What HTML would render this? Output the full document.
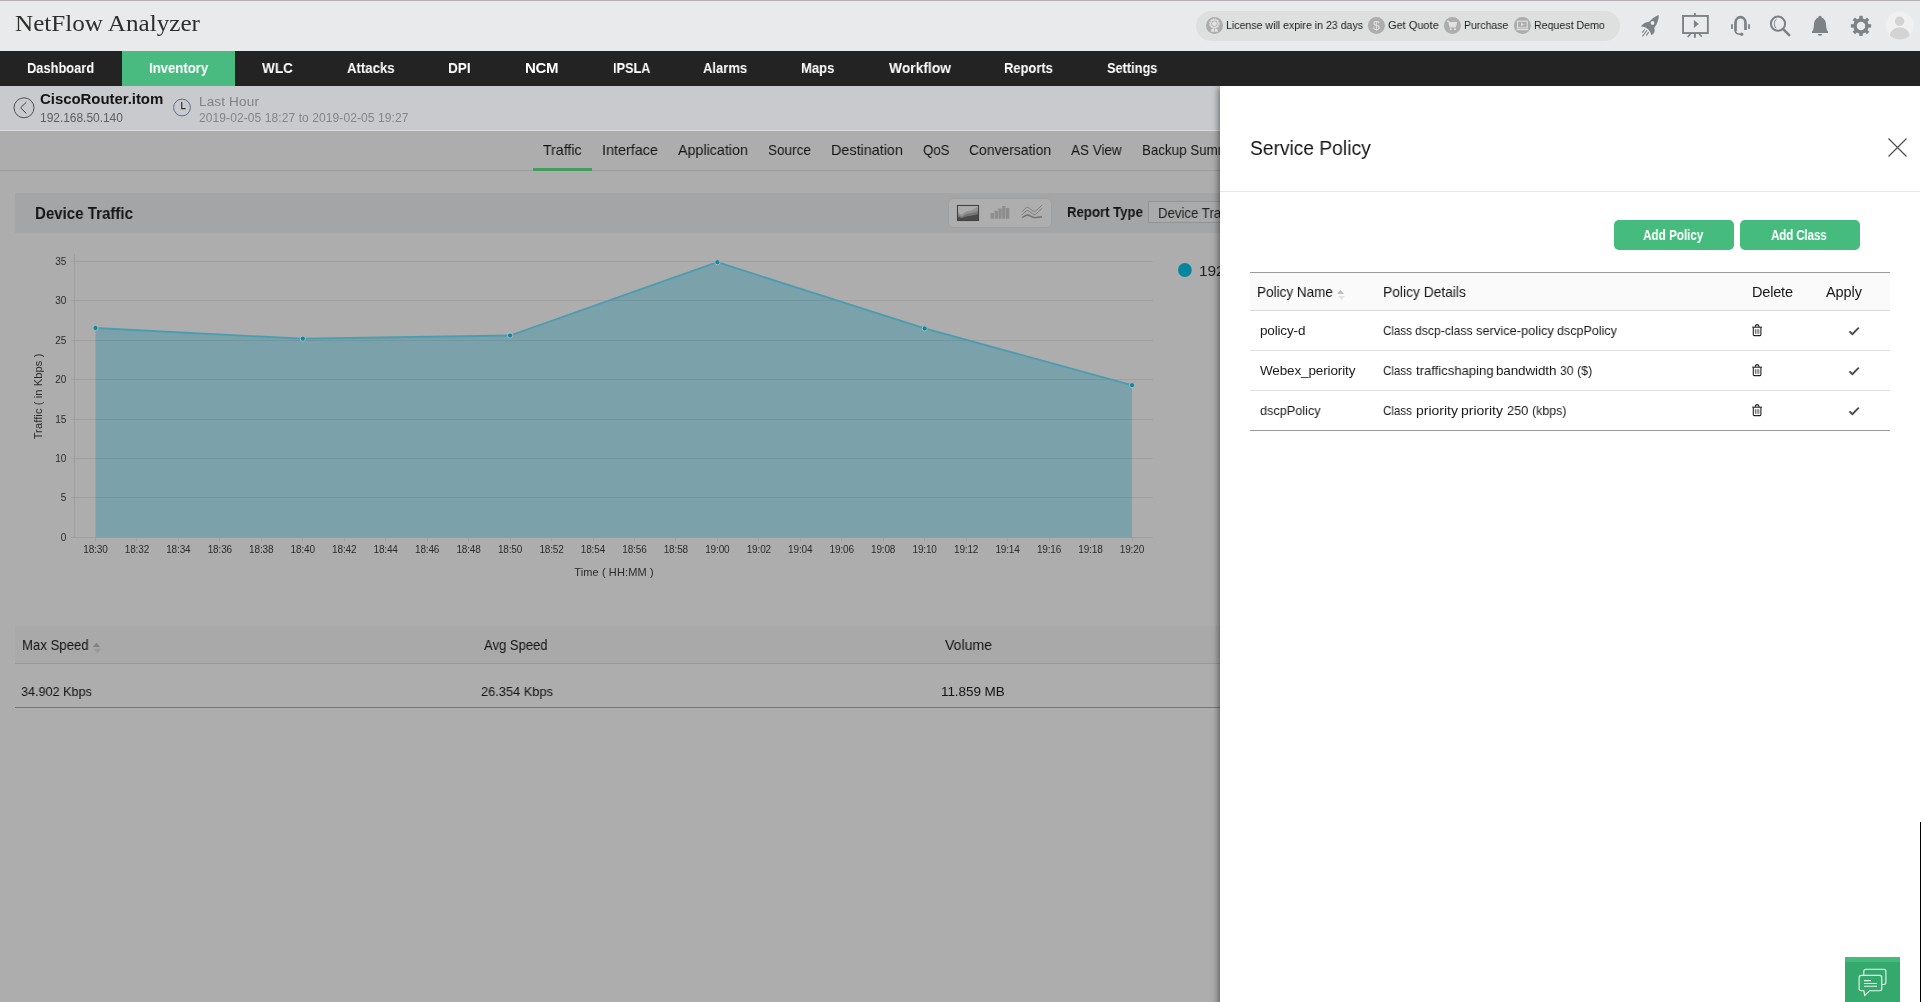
<!DOCTYPE html>
<html lang="en">
<head>
<meta charset="utf-8">
<title>NetFlow Analyzer - Service Policy</title>
<style>
html,body{margin:0;padding:0}
body{width:1921px;height:1002px;overflow:hidden;position:relative;background:#adadad;font-family:"Liberation Sans",sans-serif}
.a{position:absolute}
.t{will-change:transform;position:absolute;white-space:pre;font-family:"Liberation Sans",sans-serif;z-index:2}
.hdr{left:0;top:0;width:1920px;height:51px;background:#e9eaeb;border-top:1px solid #b3b1b4;box-sizing:border-box}
.pill{left:1196px;top:11px;width:424px;height:30px;border-radius:15px;background:#dedfdf}
.nav{left:0;top:51px;width:1920px;height:35px;background:#232323;z-index:5}
.navact{left:122px;top:51px;width:113px;height:35px;background:#49bb80;z-index:5}
.sub{left:0;top:86px;width:1920px;height:44px;background:#c9cace}
.subline{left:0;top:130px;width:1920px;height:1px;background:#dbdbdd}
.tabline{left:0;top:170px;width:1230px;height:1px;background:#9c9c9c}
.tabul{left:533px;top:168px;width:59px;height:3px;background:#449c5d}
.dbar{left:15px;top:193px;width:1215px;height:40px;background:#a4a5a7}
.bgrp{left:948px;top:198px;width:104px;height:29.5px;box-sizing:border-box;border:1px solid #9d9e9f;border-radius:5px;background:#aeaeae}
.sel{left:1148px;top:201px;width:110px;height:22px;box-sizing:border-box;border:1px solid #939394;background:#a9aaab}
.bth{left:15px;top:626px;width:1215px;height:37px;background:#a9a9a9}
.btl1{left:15px;top:663px;width:1215px;height:1px;background:#999}
.btl2{left:15px;top:707px;width:1215px;height:1px;background:#777}
.panel{left:1220px;top:86px;width:700px;height:930px;background:#fff;z-index:4;box-shadow:-1px 1px 7px rgba(0,0,0,.55)}
.psep{left:1220px;top:191px;width:700px;height:1px;background:#e7e7e7;z-index:5}
.btn{top:220px;width:120px;height:30px;border-radius:5px;background:#45bb7e;z-index:5}
.thbg{left:1250px;top:273px;width:640px;height:37px;background:#fafafa;z-index:5}
.hl{left:1250px;width:640px;height:1px;z-index:5}
.rc1{left:1920px;top:0;width:1px;height:822px;background:#fff;z-index:9}
.rc2{left:1920px;top:822px;width:1px;height:180px;background:#000;z-index:9}
.chat{left:1845px;top:957px;width:55px;height:45px;background:#35a86d;z-index:6}
.chat i{position:absolute;left:0;top:0;width:55px;height:5px;background:#46b97c}
svg.i,svg.chart{position:absolute;overflow:visible;will-change:transform}
</style>
</head>
<body>
<!-- header -->
<div class="a hdr"></div>
<div class="a pill"></div>
<svg class="i" width="1921" height="1002" viewBox="0 0 1921 1002" style="left:0;top:0;z-index:2">
<circle cx="1214.5" cy="25.4" r="8.5" fill="#adadad"/>
<circle cx="1214.4" cy="23.7" r="4.3" fill="#e2e2e2"/>
<circle cx="1214.4" cy="23.7" r="4.6" fill="none" stroke="#e2e2e2" stroke-width="1.1" stroke-dasharray="1.7 0.71"/>
<circle cx="1214.4" cy="23.7" r="2.8" fill="none" stroke="#adadad" stroke-width="0.9"/>
<path d="M1211.6,29 h2.3 l0.3,2.800 h-3.500z M1214.9,29 h2.300 l0.900,2.800 h-3.500z" fill="#e2e2e2"/>
<circle cx="1376.4" cy="25.4" r="8.5" fill="#adadad"/>
<text x="1376.4" y="29.8" font-family="Liberation Sans, sans-serif" font-size="12.5" fill="#e2e2e2" text-anchor="middle">$</text>
<circle cx="1452.4" cy="25.4" r="8.5" fill="#adadad"/>
<path d="M1447,21.2 h1.8 l1.2,5.6 h5.4 l1.1,-4.2 h-7.2" fill="none" stroke="#e2e2e2" stroke-width="1.2" stroke-linejoin="round"/>
<path d="M1449.6,22.8 h6.6 l-0.9,3.6 h-5z" fill="#e2e2e2"/>
<circle cx="1450.8" cy="29.3" r="1.05" fill="#e2e2e2"/><circle cx="1455" cy="29.3" r="1.05" fill="#e2e2e2"/>
<circle cx="1522.4" cy="25.4" r="8.5" fill="#adadad"/>
<rect x="1517.6" y="21.2" width="9.6" height="6.6" fill="none" stroke="#e2e2e2" stroke-width="1.1"/>
<path d="M1521.1,22.7 l3.2,1.8 l-3.2,1.8z" fill="#e2e2e2"/>
<path d="M1516.6,29.6 h11.6" stroke="#e2e2e2" stroke-width="1.2"/>
<path d="M1658.8,14.9 C1655,16 1651,19.5 1648.7,22.1 C1646,22 1642.5,23.8 1640.9,26.6 C1644.5,26.3 1650.5,29.5 1651.3,35.3 C1654,33.8 1655.5,30.8 1654.2,27.9 C1656.6,25 1658.9,20 1658.8,14.9Z" fill="#7d8286"/>
<circle cx="1652.5" cy="22.9" r="1.85" fill="#eceded"/>
<path d="M1644.7,29.5 L1642.2,32.7 M1647,30.4 L1642.3,36.5 M1648.7,32.2 L1646.2,35.6" stroke="#7d8286" stroke-width="1.1" fill="none"/>
<rect x="1683.05" y="15.95" width="24.8" height="17.1" fill="none" stroke="#7d8286" stroke-width="1.9"/>
<path d="M1694.9,13.1 V15.4 M1694.9,33.8 V37.7" stroke="#7d8286" stroke-width="1.9" fill="none"/>
<path d="M1690.6,34 L1687.6,36.8 M1699.2,34 L1701.8,36.6" stroke="#7d8286" stroke-width="1.6" fill="none"/>
<path d="M1693.9,20 L1698.8,23.95 L1693.9,27.9Z" fill="#7d8286"/>
<path d="M1735.5,31.2 V22.8 a5,5.7 0 0 1 10,0 V30" fill="none" stroke="#7d8286" stroke-width="2.7" stroke-linecap="butt"/>
<path d="M1732,24.8 V28.2 M1749.05,24.8 V28.2" stroke="#7d8286" stroke-width="1.8" stroke-linecap="round" fill="none"/>
<path d="M1735.2,30.6 c0.2,2.800 2,3.700 5.400,3.700" fill="none" stroke="#7d8286" stroke-width="1.5"/>
<circle cx="1741.7" cy="34.2" r="1.7" fill="#7d8286"/>
<circle cx="1778" cy="23.7" r="7.1" fill="none" stroke="#7d8286" stroke-width="2"/>
<path d="M1783.2,29.2 L1789.2,35.2" stroke="#7d8286" stroke-width="2.6" stroke-linecap="round"/>
<path d="M1776.6,19 c-3,2.2 -3,6.8 -0.4,9.2" fill="none" stroke="#7d8286" stroke-width="1"/>
<path d="M1820,15.8 c1,0 1.7,0.7 1.7,1.7 c2.9,1 4.2,3.8 4.4,7.2 c0.2,3.6 0.6,5.6 2,7.1 v1.2 h-16.2 v-1.2 c1.4,-1.5 1.8,-3.500 2,-7.1 c0.2,-3.400 1.500,-6.200 4.400,-7.200 c0,-1 0.700,-1.700 1.700,-1.700z" fill="#7d8286"/>
<path d="M1817.9,33.9 a2.1,1.9 0 0 0 4.2,0z" fill="#7d8286"/>
<circle cx="1861" cy="25.9" r="6" fill="none" stroke="#7d8286" stroke-width="3.5"/>
<rect x="1859.30" y="15.80" width="3.4" height="3.4" fill="#7d8286" transform="rotate(0 1861 25.9)"/>
<rect x="1859.30" y="15.80" width="3.4" height="3.4" fill="#7d8286" transform="rotate(45 1861 25.9)"/>
<rect x="1859.30" y="15.80" width="3.4" height="3.4" fill="#7d8286" transform="rotate(90 1861 25.9)"/>
<rect x="1859.30" y="15.80" width="3.4" height="3.4" fill="#7d8286" transform="rotate(135 1861 25.9)"/>
<rect x="1859.30" y="15.80" width="3.4" height="3.4" fill="#7d8286" transform="rotate(180 1861 25.9)"/>
<rect x="1859.30" y="15.80" width="3.4" height="3.4" fill="#7d8286" transform="rotate(225 1861 25.9)"/>
<rect x="1859.30" y="15.80" width="3.4" height="3.4" fill="#7d8286" transform="rotate(270 1861 25.9)"/>
<rect x="1859.30" y="15.80" width="3.4" height="3.4" fill="#7d8286" transform="rotate(315 1861 25.9)"/>
<defs><clipPath id="av"><circle cx="1899.8" cy="25.5" r="14"/></clipPath></defs>
<circle cx="1899.8" cy="25.5" r="14" fill="#f0f0f0"/>
<g clip-path="url(#av)" fill="#d3d3d3"><circle cx="1899.6" cy="21.2" r="4.7"/><ellipse cx="1899.8" cy="36.6" rx="10.2" ry="9.4"/></g>
<circle cx="24" cy="107.8" r="10" fill="none" stroke="#4f4f50" stroke-width="1"/>
<path d="M26.4,102.1 L20.6,107.8 L26.4,113.5" fill="none" stroke="#3c3c3c" stroke-width="1"/>
<circle cx="182" cy="107.5" r="8.4" fill="none" stroke="#5c6e84" stroke-width="1"/>
<path d="M181.7,102 V108.7 H185.6" fill="none" stroke="#333" stroke-width="1.2"/>
<rect x="957.5" y="205.5" width="21" height="15" fill="#acacac" stroke="#414141" stroke-width="1.1"/>
<path d="M958,212 L961.4,214.9 L966,211.6 L971,210.4 L975.5,208 L978,207.2 V220 H958Z" fill="#929292"/>
<path d="M958,214.8 L961.5,216.9 L966,214 L971,213.2 L975.5,212 L978,211.2 V220 H958Z" fill="#757575"/>
<path d="M958,217 L962,218 L966,216.600 L972,215.600 L978,214.2 V220 H958Z" fill="#4b4b4b"/>
<rect x="990.6" y="213.0" width="3.3" height="5.7" fill="#8d8d8d"/>
<rect x="994.6" y="210.8" width="3.3" height="7.9" fill="#8d8d8d"/>
<rect x="998.4" y="208.3" width="3.3" height="10.4" fill="#8d8d8d"/>
<rect x="1002.2" y="206.0" width="3.3" height="12.7" fill="#8d8d8d"/>
<rect x="1006.0" y="208.0" width="3.3" height="10.7" fill="#8d8d8d"/>
<path d="M1022.2,211.6 c2,-2 3.6,-4.2 5.4,-4.2 c2.2,0 4.2,4 7.2,4 c2,-0.6 4.5,-4.2 7.2,-6.200" fill="none" stroke="#7b7b7b" stroke-width="0.9"/>
<path d="M1022.2,214.8 c2,-2 3.6,-4.2 5.4,-4.2 c2.2,0 4.2,4 7.2,4 c2,-0.6 4.5,-4.2 7.2,-6.200" fill="none" stroke="#7b7b7b" stroke-width="0.9"/>
<path d="M1022.2,217.6 c2,-1.2 3.6,-2.600 5.4,-2.600 c2.2,0 4.2,2.600 7.200,2.600 c2,0 4.500,-0.600 7.200,-0.800" fill="none" stroke="#707070" stroke-width="1.4"/>
<path d="M96.5,642.8 L92.9,646.9 H100.1Z" fill="#808080"/>
<path d="M93.9,648.8 H101.1 L97.5,653Z" fill="#999"/>
</svg>
<!-- main nav -->
<div class="a nav"></div>
<div class="a navact"></div>
<!-- device sub bar -->
<div class="a sub"></div>
<div class="a subline"></div>
<!-- tabs -->
<div class="a tabline"></div>
<div class="a tabul"></div>
<!-- device traffic widget -->
<div class="a dbar"></div>
<div class="a bgrp"></div>
<div class="a sel"></div>
<svg class="chart" width="1220" height="600" viewBox="0 0 1220 600" style="position:absolute;left:0;top:0;z-index:1" font-family="Liberation Sans, sans-serif">
<line x1="71" x2="1153" y1="537.5" y2="537.5" stroke="#a0a0a0" stroke-width="1"/>
<line x1="71" x2="1153" y1="497.5" y2="497.5" stroke="#a0a0a0" stroke-width="1"/>
<line x1="71" x2="1153" y1="458.5" y2="458.5" stroke="#a0a0a0" stroke-width="1"/>
<line x1="71" x2="1153" y1="419.5" y2="419.5" stroke="#a0a0a0" stroke-width="1"/>
<line x1="71" x2="1153" y1="379.5" y2="379.5" stroke="#a0a0a0" stroke-width="1"/>
<line x1="71" x2="1153" y1="340.5" y2="340.5" stroke="#a0a0a0" stroke-width="1"/>
<line x1="71" x2="1153" y1="300.5" y2="300.5" stroke="#a0a0a0" stroke-width="1"/>
<line x1="71" x2="1153" y1="261.5" y2="261.5" stroke="#a0a0a0" stroke-width="1"/>
<line x1="74.5" x2="74.5" y1="254" y2="537.5" stroke="#9e9e9e" stroke-width="1"/>
<path d="M95.5,537.2 L95.5,328.0 L302.8,338.7 L510.1,335.5 L717.4,262.2 L924.7,328.4 L1132.0,385.2 L1132.0,537.2 Z" fill="#719fa9" fill-opacity="0.84"/>
<defs><clipPath id="ar"><path d="M95.5,537.2 L95.5,328.0 L302.8,338.7 L510.1,335.5 L717.4,262.2 L924.7,328.4 L1132.0,385.2 L1132.0,537.2 Z"/></clipPath></defs><g clip-path="url(#ar)">
<line x1="95.3" x2="1131.8" y1="537.5" y2="537.5" stroke="#3c5a63" stroke-opacity="0.13" stroke-width="1"/>
<line x1="95.3" x2="1131.8" y1="497.5" y2="497.5" stroke="#3c5a63" stroke-opacity="0.13" stroke-width="1"/>
<line x1="95.3" x2="1131.8" y1="458.5" y2="458.5" stroke="#3c5a63" stroke-opacity="0.13" stroke-width="1"/>
<line x1="95.3" x2="1131.8" y1="419.5" y2="419.5" stroke="#3c5a63" stroke-opacity="0.13" stroke-width="1"/>
<line x1="95.3" x2="1131.8" y1="379.5" y2="379.5" stroke="#3c5a63" stroke-opacity="0.13" stroke-width="1"/>
<line x1="95.3" x2="1131.8" y1="340.5" y2="340.5" stroke="#3c5a63" stroke-opacity="0.13" stroke-width="1"/>
<line x1="95.3" x2="1131.8" y1="300.5" y2="300.5" stroke="#3c5a63" stroke-opacity="0.13" stroke-width="1"/>
<line x1="95.3" x2="1131.8" y1="261.5" y2="261.5" stroke="#3c5a63" stroke-opacity="0.13" stroke-width="1"/>
</g>
<polyline points="95.5,328.0 302.8,338.7 510.1,335.5 717.4,262.2 924.7,328.4 1132.0,385.2" fill="none" stroke="#4a9db1" stroke-width="1.8" stroke-linejoin="round"/>
<circle cx="95.5" cy="328.0" r="2.6" fill="#0a88a1" stroke="#b3b8b9" stroke-width="1"/>
<circle cx="302.8" cy="338.7" r="2.6" fill="#0a88a1" stroke="#b3b8b9" stroke-width="1"/>
<circle cx="510.1" cy="335.5" r="2.6" fill="#0a88a1" stroke="#b3b8b9" stroke-width="1"/>
<circle cx="717.4" cy="262.2" r="2.6" fill="#0a88a1" stroke="#b3b8b9" stroke-width="1"/>
<circle cx="924.7" cy="328.4" r="2.6" fill="#0a88a1" stroke="#b3b8b9" stroke-width="1"/>
<circle cx="1132.0" cy="385.2" r="2.6" fill="#0a88a1" stroke="#b3b8b9" stroke-width="1"/>
<line x1="95.5" x2="95.5" y1="537.5" y2="541" stroke="#a0a0a0" stroke-width="1"/>
<text x="95.5" y="553" font-size="10" fill="#2b2b2b" text-anchor="middle" textLength="24.4" lengthAdjust="spacing">18:30</text>
<line x1="136.5" x2="136.5" y1="537.5" y2="541" stroke="#a0a0a0" stroke-width="1"/>
<text x="137.0" y="553" font-size="10" fill="#2b2b2b" text-anchor="middle" textLength="24.4" lengthAdjust="spacing">18:32</text>
<line x1="178.5" x2="178.5" y1="537.5" y2="541" stroke="#a0a0a0" stroke-width="1"/>
<text x="178.4" y="553" font-size="10" fill="#2b2b2b" text-anchor="middle" textLength="24.4" lengthAdjust="spacing">18:34</text>
<line x1="219.5" x2="219.5" y1="537.5" y2="541" stroke="#a0a0a0" stroke-width="1"/>
<text x="219.9" y="553" font-size="10" fill="#2b2b2b" text-anchor="middle" textLength="24.4" lengthAdjust="spacing">18:36</text>
<line x1="261.5" x2="261.5" y1="537.5" y2="541" stroke="#a0a0a0" stroke-width="1"/>
<text x="261.3" y="553" font-size="10" fill="#2b2b2b" text-anchor="middle" textLength="24.4" lengthAdjust="spacing">18:38</text>
<line x1="302.5" x2="302.5" y1="537.5" y2="541" stroke="#a0a0a0" stroke-width="1"/>
<text x="302.8" y="553" font-size="10" fill="#2b2b2b" text-anchor="middle" textLength="24.4" lengthAdjust="spacing">18:40</text>
<line x1="344.5" x2="344.5" y1="537.5" y2="541" stroke="#a0a0a0" stroke-width="1"/>
<text x="344.3" y="553" font-size="10" fill="#2b2b2b" text-anchor="middle" textLength="24.4" lengthAdjust="spacing">18:42</text>
<line x1="385.5" x2="385.5" y1="537.5" y2="541" stroke="#a0a0a0" stroke-width="1"/>
<text x="385.7" y="553" font-size="10" fill="#2b2b2b" text-anchor="middle" textLength="24.4" lengthAdjust="spacing">18:44</text>
<line x1="427.5" x2="427.5" y1="537.5" y2="541" stroke="#a0a0a0" stroke-width="1"/>
<text x="427.2" y="553" font-size="10" fill="#2b2b2b" text-anchor="middle" textLength="24.4" lengthAdjust="spacing">18:46</text>
<line x1="468.5" x2="468.5" y1="537.5" y2="541" stroke="#a0a0a0" stroke-width="1"/>
<text x="468.6" y="553" font-size="10" fill="#2b2b2b" text-anchor="middle" textLength="24.4" lengthAdjust="spacing">18:48</text>
<line x1="510.5" x2="510.5" y1="537.5" y2="541" stroke="#a0a0a0" stroke-width="1"/>
<text x="510.1" y="553" font-size="10" fill="#2b2b2b" text-anchor="middle" textLength="24.4" lengthAdjust="spacing">18:50</text>
<line x1="551.5" x2="551.5" y1="537.5" y2="541" stroke="#a0a0a0" stroke-width="1"/>
<text x="551.6" y="553" font-size="10" fill="#2b2b2b" text-anchor="middle" textLength="24.4" lengthAdjust="spacing">18:52</text>
<line x1="593.5" x2="593.5" y1="537.5" y2="541" stroke="#a0a0a0" stroke-width="1"/>
<text x="593.0" y="553" font-size="10" fill="#2b2b2b" text-anchor="middle" textLength="24.4" lengthAdjust="spacing">18:54</text>
<line x1="634.5" x2="634.5" y1="537.5" y2="541" stroke="#a0a0a0" stroke-width="1"/>
<text x="634.5" y="553" font-size="10" fill="#2b2b2b" text-anchor="middle" textLength="24.4" lengthAdjust="spacing">18:56</text>
<line x1="675.5" x2="675.5" y1="537.5" y2="541" stroke="#a0a0a0" stroke-width="1"/>
<text x="675.9" y="553" font-size="10" fill="#2b2b2b" text-anchor="middle" textLength="24.4" lengthAdjust="spacing">18:58</text>
<line x1="717.5" x2="717.5" y1="537.5" y2="541" stroke="#a0a0a0" stroke-width="1"/>
<text x="717.4" y="553" font-size="10" fill="#2b2b2b" text-anchor="middle" textLength="24.4" lengthAdjust="spacing">19:00</text>
<line x1="758.5" x2="758.5" y1="537.5" y2="541" stroke="#a0a0a0" stroke-width="1"/>
<text x="758.9" y="553" font-size="10" fill="#2b2b2b" text-anchor="middle" textLength="24.4" lengthAdjust="spacing">19:02</text>
<line x1="800.5" x2="800.5" y1="537.5" y2="541" stroke="#a0a0a0" stroke-width="1"/>
<text x="800.3" y="553" font-size="10" fill="#2b2b2b" text-anchor="middle" textLength="24.4" lengthAdjust="spacing">19:04</text>
<line x1="841.5" x2="841.5" y1="537.5" y2="541" stroke="#a0a0a0" stroke-width="1"/>
<text x="841.8" y="553" font-size="10" fill="#2b2b2b" text-anchor="middle" textLength="24.4" lengthAdjust="spacing">19:06</text>
<line x1="883.5" x2="883.5" y1="537.5" y2="541" stroke="#a0a0a0" stroke-width="1"/>
<text x="883.2" y="553" font-size="10" fill="#2b2b2b" text-anchor="middle" textLength="24.4" lengthAdjust="spacing">19:08</text>
<line x1="924.5" x2="924.5" y1="537.5" y2="541" stroke="#a0a0a0" stroke-width="1"/>
<text x="924.7" y="553" font-size="10" fill="#2b2b2b" text-anchor="middle" textLength="24.4" lengthAdjust="spacing">19:10</text>
<line x1="966.5" x2="966.5" y1="537.5" y2="541" stroke="#a0a0a0" stroke-width="1"/>
<text x="966.2" y="553" font-size="10" fill="#2b2b2b" text-anchor="middle" textLength="24.4" lengthAdjust="spacing">19:12</text>
<line x1="1007.5" x2="1007.5" y1="537.5" y2="541" stroke="#a0a0a0" stroke-width="1"/>
<text x="1007.6" y="553" font-size="10" fill="#2b2b2b" text-anchor="middle" textLength="24.4" lengthAdjust="spacing">19:14</text>
<line x1="1049.5" x2="1049.5" y1="537.5" y2="541" stroke="#a0a0a0" stroke-width="1"/>
<text x="1049.1" y="553" font-size="10" fill="#2b2b2b" text-anchor="middle" textLength="24.4" lengthAdjust="spacing">19:16</text>
<line x1="1090.5" x2="1090.5" y1="537.5" y2="541" stroke="#a0a0a0" stroke-width="1"/>
<text x="1090.5" y="553" font-size="10" fill="#2b2b2b" text-anchor="middle" textLength="24.4" lengthAdjust="spacing">19:18</text>
<line x1="1132.5" x2="1132.5" y1="537.5" y2="541" stroke="#a0a0a0" stroke-width="1"/>
<text x="1132.0" y="553" font-size="10" fill="#2b2b2b" text-anchor="middle" textLength="24.4" lengthAdjust="spacing">19:20</text>
<text x="66.4" y="540.8" font-size="10" fill="#2b2b2b" text-anchor="end">0</text>
<text x="66.4" y="501.4" font-size="10" fill="#2b2b2b" text-anchor="end">5</text>
<text x="66.4" y="461.9" font-size="10" fill="#2b2b2b" text-anchor="end">10</text>
<text x="66.4" y="422.6" font-size="10" fill="#2b2b2b" text-anchor="end">15</text>
<text x="66.4" y="383.1" font-size="10" fill="#2b2b2b" text-anchor="end">20</text>
<text x="66.4" y="343.8" font-size="10" fill="#2b2b2b" text-anchor="end">25</text>
<text x="66.4" y="304.4" font-size="10" fill="#2b2b2b" text-anchor="end">30</text>
<text x="66.4" y="264.9" font-size="10" fill="#2b2b2b" text-anchor="end">35</text>
<text x="613.9" y="576" font-size="11" fill="#2b2b2b" text-anchor="middle" textLength="79.3" lengthAdjust="spacing">Time ( HH:MM )</text>
<text transform="translate(42.2,396.5) rotate(-90)" font-size="11" fill="#2b2b2b" text-anchor="middle" textLength="85.7" lengthAdjust="spacing">Traffic ( in Kbps )</text>
<circle cx="1184.9" cy="270" r="6.9" fill="#06869e"/>
</svg>
<!-- summary table -->
<div class="a bth"></div>
<div class="a btl1"></div>
<div class="a btl2"></div>
<!-- slide-in panel -->
<div class="a panel"></div>
<div class="a psep"></div>
<div class="a btn" style="left:1614px"></div>
<div class="a btn" style="left:1740px"></div>
<div class="a hl" style="top:272px;background:#9b9b9b"></div>
<div class="a thbg"></div>
<div class="a hl" style="top:310px;background:#dcdcdc"></div>
<div class="a hl" style="top:350px;background:#dfdfdf"></div>
<div class="a hl" style="top:390px;background:#dfdfdf"></div>
<div class="a hl" style="top:430px;background:#9b9b9b"></div>
<svg class="i" width="1921" height="1002" viewBox="0 0 1921 1002" style="left:0;top:0;z-index:7">
<path d="M1888.5,138.5 L1906.5,156.5 M1906.5,138.5 L1888.5,156.5" stroke="#4c5054" stroke-width="1.15" fill="none"/>
<path d="M1340.5,290 L1337,293.9 H1344.1Z" fill="#bdbdbd"/>
<path d="M1338,296.1 H1345 L1341.5,300Z" fill="#e3e3e3"/>
<g transform="translate(0,0)" fill="none" stroke="#222" stroke-width="1.1">
<path d="M1752.2,327.2 H1762"/>
<path d="M1755.2,327 c0.300,-3.200 3.500,-3.200 3.800,0"/>
<path d="M1753.3,327.4 V334.600 q0,1 1,1 H1759.9 q1,0 1,-1 V327.4"/>
<path d="M1755.4,329.2 V333.8 M1757.1,329.2 V333.8 M1758.8,329.2 V333.8" stroke-width="0.9" stroke="#555"/>
</g>
<path d="M1849.5,331.3 L1852.4,334.2 L1858.8,327.6" fill="none" stroke="#4a4a4a" stroke-width="1.9"/>
<g transform="translate(0,40)" fill="none" stroke="#222" stroke-width="1.1">
<path d="M1752.2,327.2 H1762"/>
<path d="M1755.2,327 c0.300,-3.200 3.500,-3.200 3.800,0"/>
<path d="M1753.3,327.4 V334.600 q0,1 1,1 H1759.9 q1,0 1,-1 V327.4"/>
<path d="M1755.4,329.2 V333.8 M1757.1,329.2 V333.8 M1758.8,329.2 V333.8" stroke-width="0.9" stroke="#555"/>
</g>
<path d="M1849.5,371.3 L1852.4,374.2 L1858.8,367.6" fill="none" stroke="#4a4a4a" stroke-width="1.9"/>
<g transform="translate(0,80)" fill="none" stroke="#222" stroke-width="1.1">
<path d="M1752.2,327.2 H1762"/>
<path d="M1755.2,327 c0.300,-3.200 3.500,-3.200 3.800,0"/>
<path d="M1753.3,327.4 V334.600 q0,1 1,1 H1759.9 q1,0 1,-1 V327.4"/>
<path d="M1755.4,329.2 V333.8 M1757.1,329.2 V333.8 M1758.8,329.2 V333.8" stroke-width="0.9" stroke="#555"/>
</g>
<path d="M1849.5,411.3 L1852.4,414.2 L1858.8,407.6" fill="none" stroke="#4a4a4a" stroke-width="1.9"/>
<g fill="none" stroke="#e9f6ee" stroke-width="1.1" stroke-linejoin="round">
<path d="M1863.8,975.4 V971.4 q0,-2.200 2.200,-2.200 H1883.7 q2.200,0 2.200,2.200 V982.3 q0,2.200 -2.200,2.200 H1882"/>
<path d="M1861.3,975.4 H1879.6 q2.200,0 2.200,2.200 V988.5 q0,2.200 -2.200,2.200 H1869.8 L1864.6,995.7 L1863.9,990.7 H1861.3 q-2.200,0 -2.200,-2.200 V977.6 q0,-2.200 2.200,-2.200z"/>
<path d="M1864,980.6 H1871 M1864,983.5 H1877 M1864,986.2 H1877"/>
</g>
</svg>
<div class="a chat"><i></i></div>
<div class="a rc1"></div>
<div class="a rc2"></div>
<!-- texts -->
<span class="t" style="left:15.10px;top:12.34px;font-size:23px;line-height:23px;letter-spacing:0.000px;color:#2e2e2e;transform:scaleX(1.0924);transform-origin:0 0;font-family:'Liberation Serif',serif;">NetFlow Analyzer</span>
<span class="t" style="left:1226.00px;top:19.87px;font-size:11.5px;line-height:11.5px;letter-spacing:0.000px;color:#1c1c1c;transform:scaleX(0.9198);transform-origin:0 0;">License will expire in 23 days</span>
<span class="t" style="left:1388.30px;top:19.87px;font-size:11.5px;line-height:11.5px;letter-spacing:0.000px;color:#1c1c1c;transform:scaleX(0.9555);transform-origin:0 0;">Get Quote</span>
<span class="t" style="left:1464.30px;top:19.87px;font-size:11.5px;line-height:11.5px;letter-spacing:0.000px;color:#1c1c1c;transform:scaleX(0.9096);transform-origin:0 0;">Purchase</span>
<span class="t" style="left:1534.20px;top:19.87px;font-size:11.5px;line-height:11.5px;letter-spacing:0.000px;color:#1c1c1c;transform:scaleX(0.9229);transform-origin:0 0;">Request Demo</span>
<span class="t" style="left:27.10px;top:60.30px;font-size:15px;line-height:15px;letter-spacing:0.000px;color:#fff;transform:scaleX(0.8569);transform-origin:0 0;font-weight:700;z-index:6;">Dashboard</span>
<span class="t" style="left:148.85px;top:60.30px;font-size:15px;line-height:15px;letter-spacing:0.000px;color:#fff;transform:scaleX(0.8761);transform-origin:0 0;font-weight:700;z-index:6;">Inventory</span>
<span class="t" style="left:262.10px;top:60.30px;font-size:15px;line-height:15px;letter-spacing:0.000px;color:#fff;transform:scaleX(0.9047);transform-origin:0 0;font-weight:700;z-index:6;">WLC</span>
<span class="t" style="left:346.60px;top:60.30px;font-size:15px;line-height:15px;letter-spacing:0.000px;color:#fff;transform:scaleX(0.8791);transform-origin:0 0;font-weight:700;z-index:6;">Attacks</span>
<span class="t" style="left:448.35px;top:60.30px;font-size:15px;line-height:15px;letter-spacing:0.000px;color:#fff;transform:scaleX(0.9054);transform-origin:0 0;font-weight:700;z-index:6;">DPI</span>
<span class="t" style="left:525.10px;top:60.30px;font-size:15px;line-height:15px;letter-spacing:-0.386px;color:#fff;font-weight:700;z-index:6;">NCM</span>
<span class="t" style="left:612.60px;top:60.30px;font-size:15px;line-height:15px;letter-spacing:0.000px;color:#fff;transform:scaleX(0.8464);transform-origin:0 0;font-weight:700;z-index:6;">IPSLA</span>
<span class="t" style="left:702.85px;top:60.30px;font-size:15px;line-height:15px;letter-spacing:0.000px;color:#fff;transform:scaleX(0.8681);transform-origin:0 0;font-weight:700;z-index:6;">Alarms</span>
<span class="t" style="left:801.10px;top:60.30px;font-size:15px;line-height:15px;letter-spacing:0.000px;color:#fff;transform:scaleX(0.8711);transform-origin:0 0;font-weight:700;z-index:6;">Maps</span>
<span class="t" style="left:888.60px;top:60.30px;font-size:15px;line-height:15px;letter-spacing:0.000px;color:#fff;transform:scaleX(0.9207);transform-origin:0 0;font-weight:700;z-index:6;">Workflow</span>
<span class="t" style="left:1004.10px;top:60.30px;font-size:15px;line-height:15px;letter-spacing:0.000px;color:#fff;transform:scaleX(0.8626);transform-origin:0 0;font-weight:700;z-index:6;">Reports</span>
<span class="t" style="left:1106.60px;top:60.30px;font-size:15px;line-height:15px;letter-spacing:0.000px;color:#fff;transform:scaleX(0.8515);transform-origin:0 0;font-weight:700;z-index:6;">Settings</span>
<span class="t" style="left:39.50px;top:91.00px;font-size:15px;line-height:15px;letter-spacing:-0.059px;color:#151515;font-weight:700;">CiscoRouter.itom</span>
<span class="t" style="left:40.00px;top:111.74px;font-size:12px;line-height:12px;letter-spacing:-0.040px;color:#5e5f62;">192.168.50.140</span>
<span class="t" style="left:199.10px;top:94.77px;font-size:13.5px;line-height:13.5px;letter-spacing:0.171px;color:#7f8185;">Last Hour</span>
<span class="t" style="left:198.60px;top:111.74px;font-size:12px;line-height:12px;letter-spacing:0.092px;color:#83858a;">2019-02-05 18:27 to 2019-02-05 19:27</span>
<span class="t" style="left:543.10px;top:142.20px;font-size:15px;line-height:15px;letter-spacing:0.000px;color:#141414;transform:scaleX(0.9463);transform-origin:0 0;">Traffic</span>
<span class="t" style="left:601.60px;top:142.20px;font-size:15px;line-height:15px;letter-spacing:0.000px;color:#141414;transform:scaleX(0.9576);transform-origin:0 0;">Interface</span>
<span class="t" style="left:677.60px;top:142.20px;font-size:15px;line-height:15px;letter-spacing:0.000px;color:#141414;transform:scaleX(0.9524);transform-origin:0 0;">Application</span>
<span class="t" style="left:767.60px;top:142.20px;font-size:15px;line-height:15px;letter-spacing:0.000px;color:#141414;transform:scaleX(0.9026);transform-origin:0 0;">Source</span>
<span class="t" style="left:830.60px;top:142.20px;font-size:15px;line-height:15px;letter-spacing:0.000px;color:#141414;transform:scaleX(0.9581);transform-origin:0 0;">Destination</span>
<span class="t" style="left:922.60px;top:142.20px;font-size:15px;line-height:15px;letter-spacing:0.000px;color:#141414;transform:scaleX(0.8795);transform-origin:0 0;">QoS</span>
<span class="t" style="left:968.90px;top:142.20px;font-size:15px;line-height:15px;letter-spacing:0.000px;color:#141414;transform:scaleX(0.9288);transform-origin:0 0;">Conversation</span>
<span class="t" style="left:1071.30px;top:142.20px;font-size:15px;line-height:15px;letter-spacing:0.000px;color:#141414;transform:scaleX(0.8986);transform-origin:0 0;">AS View</span>
<span class="t" style="left:1142.30px;top:142.20px;font-size:15px;line-height:15px;letter-spacing:0.000px;color:#141414;transform:scaleX(0.8904);transform-origin:0 0;">Backup Summary</span>
<span class="t" style="left:35.10px;top:205.03px;font-size:16.5px;line-height:16.5px;letter-spacing:0.000px;color:#141414;transform:scaleX(0.9123);transform-origin:0 0;font-weight:700;">Device Traffic</span>
<span class="t" style="left:1067.10px;top:204.93px;font-size:14.5px;line-height:14.5px;letter-spacing:0.000px;color:#141414;transform:scaleX(0.9086);transform-origin:0 0;font-weight:700;">Report Type</span>
<span class="t" style="left:1158.20px;top:205.73px;font-size:14.5px;line-height:14.5px;letter-spacing:0.000px;color:#222;transform:scaleX(0.9112);transform-origin:0 0;">Device Traffic</span>
<span class="t" style="left:1198.90px;top:262.88px;font-size:15.5px;line-height:15.5px;letter-spacing:-0.127px;color:#222;">192.168.50.140</span>
<span class="t" style="left:21.90px;top:638.13px;font-size:14.5px;line-height:14.5px;letter-spacing:0.000px;color:#141414;transform:scaleX(0.9079);transform-origin:0 0;">Max Speed</span>
<span class="t" style="left:484.40px;top:638.13px;font-size:14.5px;line-height:14.5px;letter-spacing:0.000px;color:#141414;transform:scaleX(0.8997);transform-origin:0 0;">Avg Speed</span>
<span class="t" style="left:944.60px;top:638.13px;font-size:14.5px;line-height:14.5px;letter-spacing:0.000px;color:#141414;transform:scaleX(0.9716);transform-origin:0 0;">Volume</span>
<span class="t" style="left:21.30px;top:684.57px;font-size:13.5px;line-height:13.5px;letter-spacing:0.000px;color:#141414;transform:scaleX(0.9352);transform-origin:0 0;">34.902 Kbps</span>
<span class="t" style="left:480.60px;top:684.57px;font-size:13.5px;line-height:13.5px;letter-spacing:0.000px;color:#141414;transform:scaleX(0.9497);transform-origin:0 0;">26.354 Kbps</span>
<span class="t" style="left:940.80px;top:684.57px;font-size:13.5px;line-height:13.5px;letter-spacing:-0.075px;color:#141414;">11.859 MB</span>
<span class="t" style="left:1250.10px;top:137.02px;font-size:21px;line-height:21px;letter-spacing:0.000px;color:#141414;transform:scaleX(0.9148);transform-origin:0 0;z-index:5;">Service Policy</span>
<span class="t" style="left:1643.35px;top:228.35px;font-size:14px;line-height:14px;letter-spacing:-0.051px;color:#fff;transform:scaleX(0.8400);transform-origin:0 0;font-weight:700;z-index:5;">Add Policy</span>
<span class="t" style="left:1771.35px;top:228.35px;font-size:14px;line-height:14px;letter-spacing:-0.277px;color:#fff;transform:scaleX(0.8400);transform-origin:0 0;font-weight:700;z-index:5;">Add Class</span>
<span class="t" style="left:1257.10px;top:284.83px;font-size:14.5px;line-height:14.5px;letter-spacing:0.000px;color:#161616;transform:scaleX(0.9325);transform-origin:0 0;z-index:5;">Policy Name</span>
<span class="t" style="left:1382.85px;top:284.83px;font-size:14.5px;line-height:14.5px;letter-spacing:0.000px;color:#161616;transform:scaleX(0.9525);transform-origin:0 0;z-index:5;">Policy Details</span>
<span class="t" style="left:1752.00px;top:284.83px;font-size:14.5px;line-height:14.5px;letter-spacing:-0.184px;color:#161616;z-index:5;">Delete</span>
<span class="t" style="left:1825.60px;top:284.83px;font-size:14.5px;line-height:14.5px;letter-spacing:-0.095px;color:#161616;z-index:5;">Apply</span>
<span class="t" style="left:1259.60px;top:323.57px;font-size:13.5px;line-height:13.5px;letter-spacing:-0.162px;color:#1a1a1a;z-index:5;">policy-d</span>
<span class="t" style="left:1383.10px;top:323.57px;font-size:13.5px;line-height:13.5px;letter-spacing:0.000px;color:#1a1a1a;transform:scaleX(0.8589);transform-origin:0 0;z-index:5;">Class</span>
<span class="t" style="left:1415.20px;top:323.57px;font-size:13.5px;line-height:13.5px;letter-spacing:0.000px;color:#1a1a1a;transform:scaleX(0.9031);transform-origin:0 0;z-index:5;">dscp-class</span>
<span class="t" style="left:1475.80px;top:323.57px;font-size:13.5px;line-height:13.5px;letter-spacing:0.000px;color:#1a1a1a;transform:scaleX(0.9525);transform-origin:0 0;z-index:5;">service-policy</span>
<span class="t" style="left:1557.30px;top:323.57px;font-size:13.5px;line-height:13.5px;letter-spacing:0.000px;color:#1a1a1a;transform:scaleX(0.9282);transform-origin:0 0;z-index:5;">dscpPolicy</span>
<span class="t" style="left:1259.60px;top:363.57px;font-size:13.5px;line-height:13.5px;letter-spacing:-0.135px;color:#1a1a1a;z-index:5;">Webex_periority</span>
<span class="t" style="left:1383.10px;top:363.57px;font-size:13.5px;line-height:13.5px;letter-spacing:0.000px;color:#1a1a1a;transform:scaleX(0.8589);transform-origin:0 0;z-index:5;">Class</span>
<span class="t" style="left:1415.50px;top:363.57px;font-size:13.5px;line-height:13.5px;letter-spacing:0.000px;color:#1a1a1a;transform:scaleX(0.9692);transform-origin:0 0;z-index:5;">trafficshaping</span>
<span class="t" style="left:1496.40px;top:363.57px;font-size:13.5px;line-height:13.5px;letter-spacing:-0.145px;color:#1a1a1a;z-index:5;">bandwidth</span>
<span class="t" style="left:1559.90px;top:363.57px;font-size:13.5px;line-height:13.5px;letter-spacing:0.000px;color:#1a1a1a;transform:scaleX(0.8981);transform-origin:0 0;z-index:5;">30</span>
<span class="t" style="left:1577.00px;top:363.57px;font-size:13.5px;line-height:13.5px;letter-spacing:0.000px;color:#1a1a1a;transform:scaleX(0.9212);transform-origin:0 0;z-index:5;">($)</span>
<span class="t" style="left:1259.60px;top:403.57px;font-size:13.5px;line-height:13.5px;letter-spacing:0.000px;color:#1a1a1a;transform:scaleX(0.9399);transform-origin:0 0;z-index:5;">dscpPolicy</span>
<span class="t" style="left:1383.10px;top:403.57px;font-size:13.5px;line-height:13.5px;letter-spacing:0.000px;color:#1a1a1a;transform:scaleX(0.8589);transform-origin:0 0;z-index:5;">Class</span>
<span class="t" style="left:1415.80px;top:403.57px;font-size:13.5px;line-height:13.5px;letter-spacing:0.000px;color:#1a1a1a;transform:scaleX(1.0342);transform-origin:0 0;z-index:5;">priority</span>
<span class="t" style="left:1461.40px;top:403.57px;font-size:13.5px;line-height:13.5px;letter-spacing:0.000px;color:#1a1a1a;transform:scaleX(1.0342);transform-origin:0 0;z-index:5;">priority</span>
<span class="t" style="left:1506.80px;top:403.57px;font-size:13.5px;line-height:13.5px;letter-spacing:0.000px;color:#1a1a1a;transform:scaleX(0.9454);transform-origin:0 0;z-index:5;">250</span>
<span class="t" style="left:1531.80px;top:403.57px;font-size:13.5px;line-height:13.5px;letter-spacing:0.000px;color:#1a1a1a;transform:scaleX(0.9196);transform-origin:0 0;z-index:5;">(kbps)</span>
</body>
</html>
